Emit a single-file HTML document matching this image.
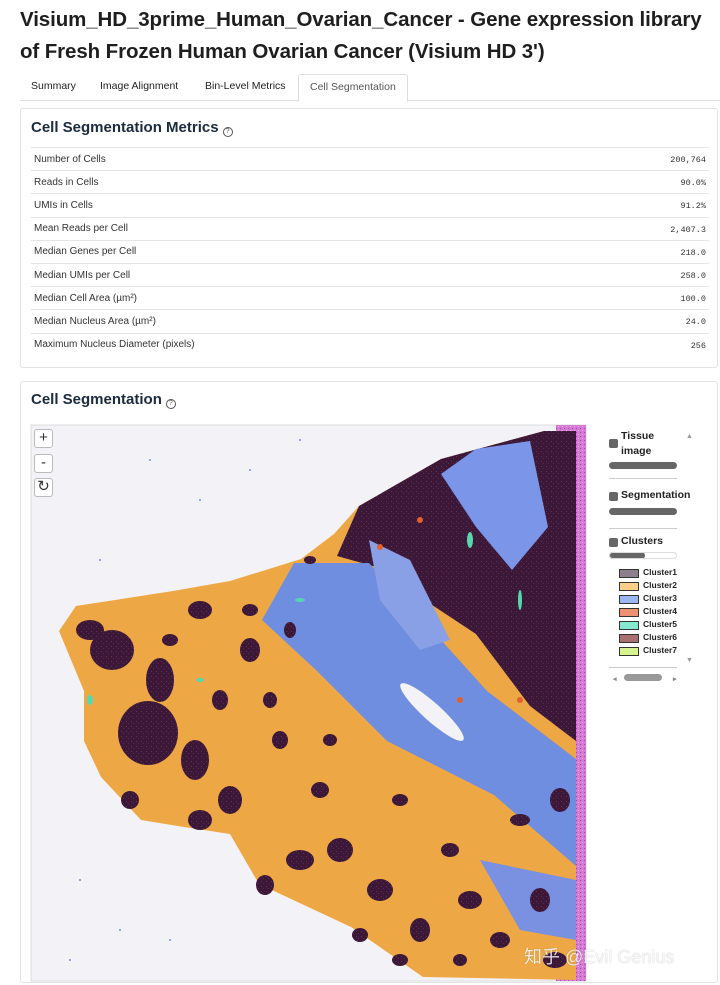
<!DOCTYPE html>
<html><head><meta charset="utf-8"><style>
*{box-sizing:border-box}
body{margin:0;width:720px;height:985px;background:#fff;font-family:"Liberation Sans",sans-serif;color:#222;overflow:hidden;position:relative}
h1{position:absolute;left:20px;top:4px;margin:0;font-size:20.5px;line-height:32px;font-weight:bold;color:#1e1e1e;letter-spacing:-0.1px}
.tabs{position:absolute;left:20px;top:74px;width:700px;height:27px;border-bottom:1px solid #ddd;font-size:10.5px}
.tabs span{position:absolute;top:6px}
.tabs .act{top:0;height:28px;padding:6px 11px;border:1px solid #ddd;border-bottom:1px solid #fff;background:#fff;border-radius:3px 3px 0 0;color:#555}
.card{position:absolute;left:20px;width:698px;border:1px solid #e3e3e3;border-radius:3px;background:#fff}
.ct{position:absolute;left:10px;font-size:15px;font-weight:bold;color:#1a2a40}
.q{display:inline-block;width:10px;height:10px;border:1px solid #555;border-radius:50%;font-size:7px;line-height:8px;text-align:center;font-weight:normal;vertical-align:-1px;margin-left:4px;color:#555}
table{position:absolute;left:10px;top:38px;width:678px;border-collapse:collapse;font-size:10px;color:#333}
td{height:23.2px;border-top:1px solid #e4e4e4;padding:0 3px;vertical-align:middle}
td.v{text-align:right;font-family:"Liberation Mono",monospace;font-size:8.5px;vertical-align:middle;padding-top:2px}
.btn{position:absolute;left:34px;width:19px;height:19px;border:1px solid #bbb;border-radius:3px;background:#fff;font-size:15px;line-height:16px;text-align:center;color:#333}
.leg{position:absolute;left:597px;top:425px;width:112px;height:260px;background:#fff;font-size:10.5px;font-weight:bold}
.cb{position:absolute;width:9px;height:9px;background:#666;border-radius:2px}
.sl{position:absolute;height:7px;border-radius:4px;background:#666}
.hr{position:absolute;left:12px;width:68px;border-top:1px solid #ccc}
.sw{position:absolute;left:22px;width:20px;height:9px;border:1px solid #333}
.cl{position:absolute;left:46px;font-size:8.5px}
</style></head><body>
<h1>Visium_HD_3prime_Human_Ovarian_Cancer - Gene expression library<br>of Fresh Frozen Human Ovarian Cancer (Visium HD 3')</h1>
<div class="tabs">
<span style="left:11px">Summary</span><span style="left:80px">Image Alignment</span><span style="left:185px">Bin-Level Metrics</span>
<span class="act" style="left:278px">Cell Segmentation</span></div>

<div class="card" style="top:108px;height:260px">
<div class="ct" style="top:10px">Cell Segmentation Metrics<span class="q">?</span></div>
<table>
<tr><td>Number of Cells</td><td class="v">200,764</td></tr>
<tr><td>Reads in Cells</td><td class="v">90.0%</td></tr>
<tr><td>UMIs in Cells</td><td class="v">91.2%</td></tr>
<tr><td>Mean Reads per Cell</td><td class="v">2,407.3</td></tr>
<tr><td>Median Genes per Cell</td><td class="v">218.0</td></tr>
<tr><td>Median UMIs per Cell</td><td class="v">258.0</td></tr>
<tr><td>Median Cell Area (µm²)</td><td class="v">100.0</td></tr>
<tr><td>Median Nucleus Area (µm²)</td><td class="v">24.0</td></tr>
<tr><td>Maximum Nucleus Diameter (pixels)</td><td class="v">256</td></tr>
</table></div>

<div class="card" style="top:381px;height:602px">
<div class="ct" style="top:9px">Cell Segmentation<span class="q">?</span></div></div>

<svg style="position:absolute;left:0;top:0" width="720" height="985" viewBox="0 0 720 985">
<defs><pattern id="pk" width="4" height="4" patternUnits="userSpaceOnUse"><rect width="4" height="4" fill="#d47ad2"/><rect width="1" height="1" fill="#a548a8"/><rect x="2" y="2" width="1" height="1" fill="#eab0e6"/></pattern>
<pattern id="dk" width="5" height="5" patternUnits="userSpaceOnUse"><rect width="5" height="5" fill="#3b1838"/><rect x="1" y="1" width="1" height="1" fill="#6a3050"/><rect x="3" y="3" width="1" height="1" fill="#5a2a4a"/></pattern></defs>
<rect x="31" y="425" width="555" height="556" fill="#f3f2f6" stroke="#ddd"/>
<rect x="556" y="425" width="30" height="556" fill="url(#pk)"/>
<polygon fill="#eda744" points="544,431 441,459 359,506 334,534 301,559 230,581 173,591 76,606 59,631 84,691 84,741 101,777 141,820 184,827 230,834 259,884 351,927 387,952 423,977 576,980 576,431"/>
<polygon fill="url(#dk)" points="359,506 441,459 544,431 576,431 576,741 530,706 476,634 423,599 387,570 337,556"/>
<polygon fill="#6f8ee0" points="294,563 369,563 423,620 487,691 576,759 576,866 494,795 387,741 316,670 262,620"/>
<polygon fill="#7b96e8" points="476,449 530,441 548,527 512,570 476,527 441,474"/>
<polygon fill="#8aa0e6" points="369,540 410,560 450,640 420,650 380,600"/>
<polygon fill="#7a90e0" points="480,860 576,880 576,940 520,930"/>
<ellipse cx="432" cy="712" rx="42" ry="9" transform="rotate(42 432 712)" fill="#f3f2f6"/>
<g fill="url(#dk)">
<ellipse cx="148" cy="733" rx="30" ry="32"/><ellipse cx="112" cy="650" rx="22" ry="20"/><ellipse cx="160" cy="680" rx="14" ry="22"/>
<ellipse cx="90" cy="630" rx="14" ry="10"/><ellipse cx="200" cy="610" rx="12" ry="9"/><ellipse cx="250" cy="650" rx="10" ry="12"/>
<ellipse cx="195" cy="760" rx="14" ry="20"/><ellipse cx="230" cy="800" rx="12" ry="14"/><ellipse cx="200" cy="820" rx="12" ry="10"/>
<ellipse cx="280" cy="740" rx="8" ry="9"/><ellipse cx="320" cy="790" rx="9" ry="8"/><ellipse cx="340" cy="850" rx="13" ry="12"/>
<ellipse cx="300" cy="860" rx="14" ry="10"/><ellipse cx="380" cy="890" rx="13" ry="11"/><ellipse cx="420" cy="930" rx="10" ry="12"/>
<ellipse cx="470" cy="900" rx="12" ry="9"/><ellipse cx="500" cy="940" rx="10" ry="8"/><ellipse cx="540" cy="900" rx="10" ry="12"/>
<ellipse cx="555" cy="960" rx="12" ry="8"/><ellipse cx="265" cy="885" rx="9" ry="10"/><ellipse cx="360" cy="935" rx="8" ry="7"/>
<ellipse cx="220" cy="700" rx="8" ry="10"/><ellipse cx="270" cy="700" rx="7" ry="8"/><ellipse cx="330" cy="740" rx="7" ry="6"/>
<ellipse cx="400" cy="800" rx="8" ry="6"/><ellipse cx="450" cy="850" rx="9" ry="7"/><ellipse cx="520" cy="820" rx="10" ry="6"/>
<ellipse cx="560" cy="800" rx="10" ry="12"/><ellipse cx="130" cy="800" rx="9" ry="9"/><ellipse cx="250" cy="610" rx="8" ry="6"/>
<ellipse cx="290" cy="630" rx="6" ry="8"/><ellipse cx="400" cy="960" rx="8" ry="6"/><ellipse cx="460" cy="960" rx="7" ry="6"/>
<ellipse cx="310" cy="560" rx="6" ry="4"/><ellipse cx="170" cy="640" rx="8" ry="6"/>
</g>
<g fill="#55d8b0"><ellipse cx="200" cy="680" rx="4" ry="2"/><ellipse cx="300" cy="600" rx="5" ry="2"/><ellipse cx="470" cy="540" rx="3" ry="8"/><ellipse cx="520" cy="600" rx="2" ry="10"/><ellipse cx="90" cy="700" rx="3" ry="5"/></g>
<g fill="#e2602c"><circle cx="380" cy="547" r="3"/><circle cx="420" cy="520" r="3"/><circle cx="520" cy="700" r="3"/><circle cx="460" cy="700" r="3"/></g>
<g fill="#6f8ee0"><circle cx="150" cy="460" r="1"/><circle cx="200" cy="500" r="1"/><circle cx="100" cy="560" r="1"/><circle cx="80" cy="880" r="1"/><circle cx="120" cy="930" r="1"/><circle cx="70" cy="960" r="1"/><circle cx="250" cy="470" r="1"/><circle cx="300" cy="440" r="1"/><circle cx="170" cy="940" r="1"/></g>
</svg>
<div class="btn" style="top:429px">+</div>
<div class="btn" style="top:454px">-</div>
<div class="btn" style="top:478px">↻</div>

<div class="leg">
<div class="cb" style="left:12px;top:14px"></div>
<div style="position:absolute;left:24px;top:4px;line-height:15px">Tissue<br>image</div>
<div class="sl" style="left:12px;top:37px;width:68px"></div>
<div class="hr" style="top:53px"></div>
<div class="cb" style="left:12px;top:67px"></div>
<div style="position:absolute;left:24px;top:64px;white-space:nowrap;width:88px;overflow:hidden">Segmentation</div>
<div class="sl" style="left:12px;top:83px;width:68px"></div>
<div class="hr" style="top:103px"></div>
<div class="cb" style="left:12px;top:113px"></div>
<div style="position:absolute;left:24px;top:110px">Clusters</div>
<div class="sl" style="left:12px;top:127px;width:36px"></div>
<div style="position:absolute;left:12px;top:127px;width:68px;height:7px;border:1px solid #ddd;border-radius:4px"></div>
<div class="sw" style="top:144px;background:#8e7f8e"></div><div class="cl" style="top:142px">Cluster1</div>
<div class="sw" style="top:157px;background:#fbcf8a"></div><div class="cl" style="top:155px">Cluster2</div>
<div class="sw" style="top:170px;background:#9ab7f2"></div><div class="cl" style="top:168px">Cluster3</div>
<div class="sw" style="top:183px;background:#ee9172"></div><div class="cl" style="top:181px">Cluster4</div>
<div class="sw" style="top:196px;background:#86e8d0"></div><div class="cl" style="top:194px">Cluster5</div>
<div class="sw" style="top:209px;background:#a87070"></div><div class="cl" style="top:207px">Cluster6</div>
<div class="sw" style="top:222px;background:#d6f592"></div><div class="cl" style="top:220px">Cluster7</div>
<div class="hr" style="top:242px"></div>
<div style="position:absolute;left:16px;top:250px;font-size:7px;color:#888">◂</div>
<div class="sl" style="left:27px;top:249px;width:38px;background:#999"></div>
<div style="position:absolute;left:76px;top:250px;font-size:7px;color:#888">▸</div>
<div style="position:absolute;left:89px;top:8px;font-size:7px;color:#999">▲</div>
<div style="position:absolute;left:89px;top:232px;font-size:7px;color:#999">▼</div>
</div>
<div style="position:absolute;left:524px;top:943px;font-family:'Liberation Sans','Noto Sans CJK SC',sans-serif;font-size:18px;color:rgba(255,255,255,0.85);white-space:nowrap;text-shadow:0 0 1px rgba(0,0,0,0.3)">知乎 @Evil Genius</div>
</body></html>
